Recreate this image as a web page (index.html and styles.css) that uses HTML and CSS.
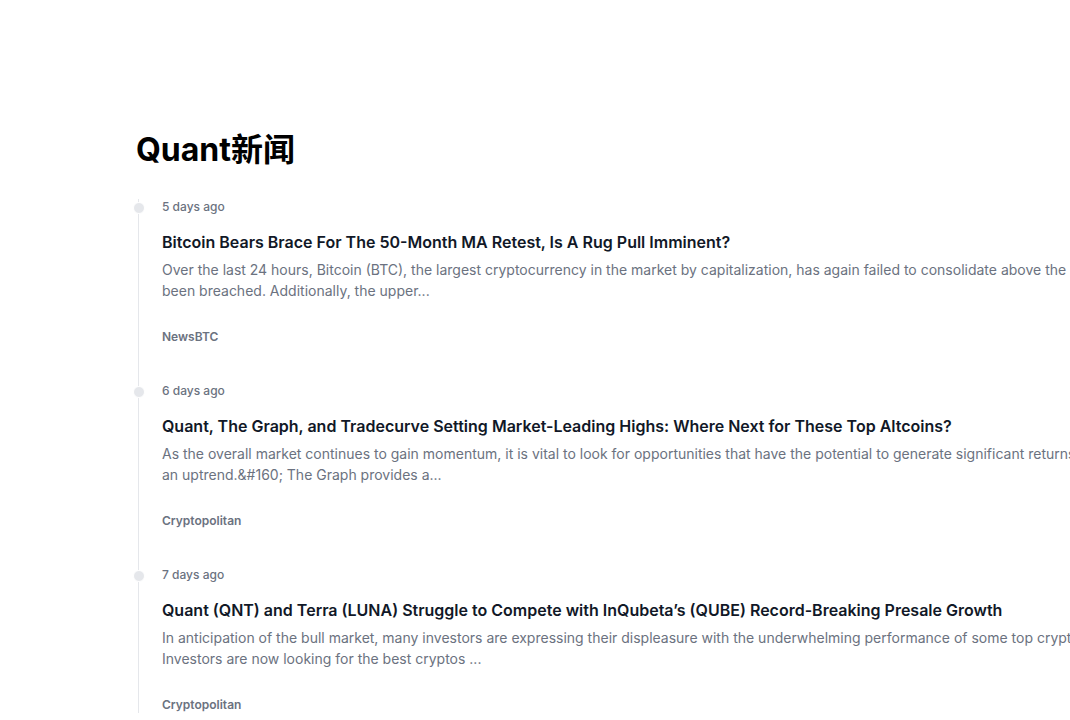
FILE: index.html
```
<!DOCTYPE html>
<html lang="zh">
<head>
    <meta charset="UTF-8">
    <meta name="viewport" content="width=device-width, initial-scale=1.0">
    <title>Quant新闻</title>
    <link rel="stylesheet" href="styles.css">
</head>
<body>
    <main class="news-page">
        <h1 class="news-title">Quant新闻</h1>

        <ol class="timeline">
            <li class="timeline-item">
                <span class="timeline-dot"></span>
                <time class="news-time">5 days ago</time>
                <h3 class="news-heading">Bitcoin Bears Brace For The 50-Month MA Retest, Is A Rug Pull Imminent?</h3>
                <p class="news-text">Over the last 24 hours, Bitcoin (BTC), the largest cryptocurrency in the market by capitalization, has again failed to consolidate above the $20K level. Support has been&nbsp;breached. Additionally, the upper...</p>
                <span class="news-source">NewsBTC</span>
            </li>
            <li class="timeline-item">
                <span class="timeline-dot"></span>
                <time class="news-time">6 days ago</time>
                <h3 class="news-heading">Quant, The Graph, and Tradecurve Setting Market-Leading Highs: Where Next for These Top Altcoins?</h3>
                <p class="news-text">As the overall market continues to gain momentum, it is vital to look for opportunities that have the potential to generate significant returns as altcoins begin an&nbsp;uptrend.&amp;#160; The Graph provides a...</p>
                <span class="news-source">Cryptopolitan</span>
            </li>
            <li class="timeline-item">
                <span class="timeline-dot"></span>
                <time class="news-time">7 days ago</time>
                <h3 class="news-heading">Quant (QNT) and Terra (LUNA) Struggle to Compete with InQubeta’s (QUBE) Record-Breaking Presale Growth</h3>
                <p class="news-text">In anticipation of the bull market, many investors are expressing their displeasure with the underwhelming performance of some top cryptos this year so far. Investors&nbsp;are now looking for the best cryptos ...</p>
                <span class="news-source">Cryptopolitan</span>
            </li>
        </ol>
    </main>
</body>
</html>
```

FILE: styles.css
```
html {
    overflow-x: hidden;
}

body {
    font-family: Inter, "Noto Sans CJK SC", sans-serif;
    margin: 0;
    background: #ffffff;
}

.news-page {
    width: 1114px;
    padding: 126px 0 40px 136px;
}

.news-title {
    font-size: 32px;
    line-height: 48px;
    font-weight: 700;
    color: #000000;
    margin: 0 0 25px 0;
}

.timeline {
    position: relative;
    list-style: none;
    margin: 0 0 0 2px;
    padding: 0;
    border-left: 1px solid #e5e7eb;
}

.timeline-item {
    margin: 0 0 38px 23px;
}

.timeline-dot {
    position: absolute;
    left: -6px;
    width: 10px;
    height: 10px;
    margin-top: 3px;
    border: 1px solid #ffffff;
    border-radius: 50%;
    background: #e5e7eb;
}

.news-time {
    display: block;
    font-size: 12px;
    line-height: 16px;
    font-weight: 500;
    color: #6b7280;
    margin-bottom: 15px;
}

.news-heading {
    font-size: 16px;
    line-height: 24px;
    font-weight: 600;
    color: #111827;
    margin: 0 0 5px 0;
}

.news-text {
    font-size: 14px;
    line-height: 21px;
    color: #6b7280;
    margin: 0 0 28px 0;
}

.news-source {
    display: block;
    font-size: 12px;
    line-height: 16px;
    font-weight: 600;
    color: #6b7280;
}
```
